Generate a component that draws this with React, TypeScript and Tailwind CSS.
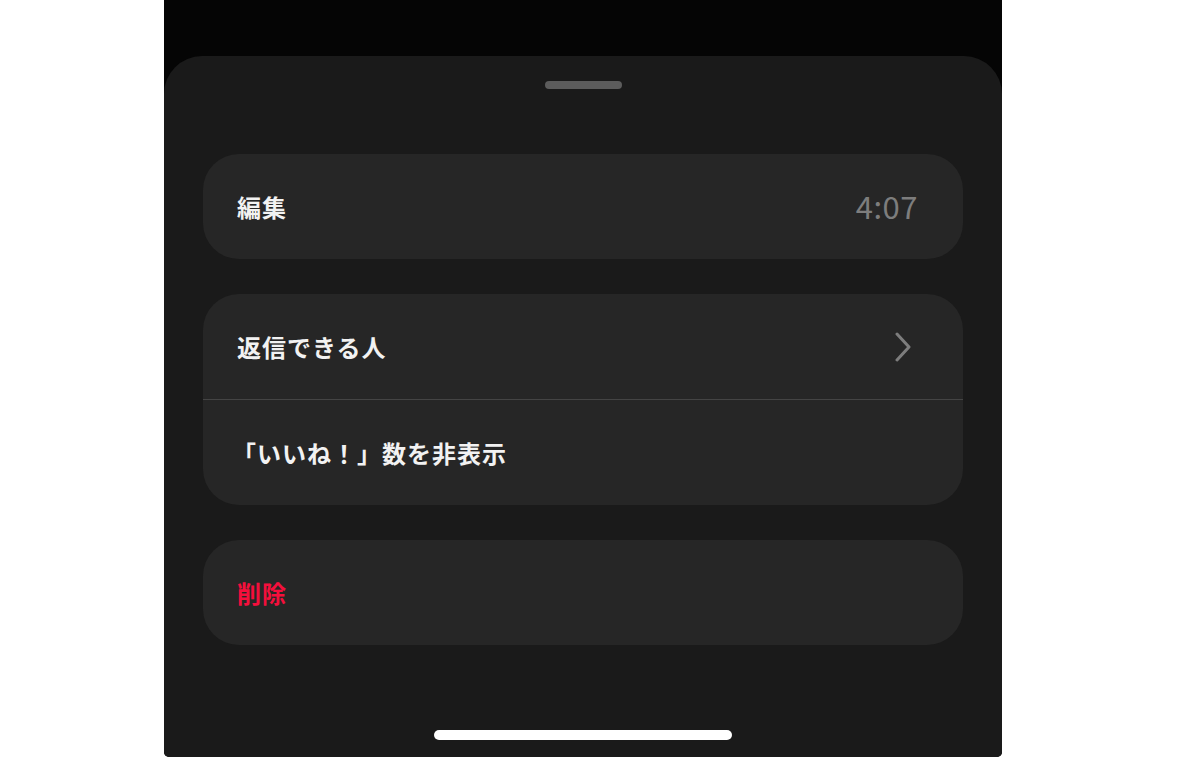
const FONT = "font-['Noto_Sans_CJK_JP','Noto_Sans',sans-serif]"

function Chevron() {
  return (
    <svg width="18" height="30" viewBox="0 0 18 30" fill="none">
      <path
        d="M3 2 L15 15 L3 28"
        stroke="#7d7d7d"
        strokeWidth="3"
        strokeLinecap="round"
        strokeLinejoin="round"
      />
    </svg>
  )
}

function Row({
  label,
  right,
  danger,
  shift,
}: {
  label: string
  right?: React.ReactNode
  danger?: boolean
  shift?: boolean
}) {
  return (
    <div className="flex h-[105px] items-center justify-between pl-[34px] pr-[45px]">
      <span
        className={[
          'text-[24px] font-semibold tracking-[1px]',
          danger ? 'text-[#f50f3c]' : 'text-[#f2f2f2]',
          shift ? '-ml-[5px]' : '',
        ].join(' ')}
      >
        {label}
      </span>
      {right}
    </div>
  )
}

export default function App() {
  return (
    <div className={`min-h-[757px] bg-white ${FONT}`}>
      <div className="ml-[164px] flex h-[757px] w-[838px] flex-col overflow-hidden rounded-b-[5px] bg-[#050505]">
        <div className="h-[56px] shrink-0" />
        <div className="flex flex-1 flex-col rounded-t-[38px] bg-[#1a1a1a]">
          {/* grabber */}
          <div className="flex justify-center pt-[25px]">
            <div className="h-[8px] w-[77px] rounded-full bg-[#5c5c5c]" />
          </div>

          <div className="mt-[65px] flex flex-col gap-[35px] px-[39px]">
            <div className="overflow-hidden rounded-[36px] bg-[#262626]">
              <Row
                label="編集"
                right={<span className="text-[31px] font-normal tracking-[0.5px] text-[#7d7d7d]">4:07</span>}
              />
            </div>

            <div className="overflow-hidden rounded-[36px] bg-[#262626]">
              <div className="pr-[6px]">
                <Row label="返信できる人" right={<Chevron />} />
              </div>
              <div className="h-px bg-[#444444]" />
              <Row label="「いいね！」数を非表示" shift />
            </div>

            <div className="overflow-hidden rounded-[36px] bg-[#262626]">
              <Row label="削除" danger />
            </div>
          </div>

          <div className="mt-auto flex justify-center pb-[17px]">
            <div className="h-[10px] w-[298px] rounded-full bg-white" />
          </div>
        </div>
      </div>
    </div>
  )
}
